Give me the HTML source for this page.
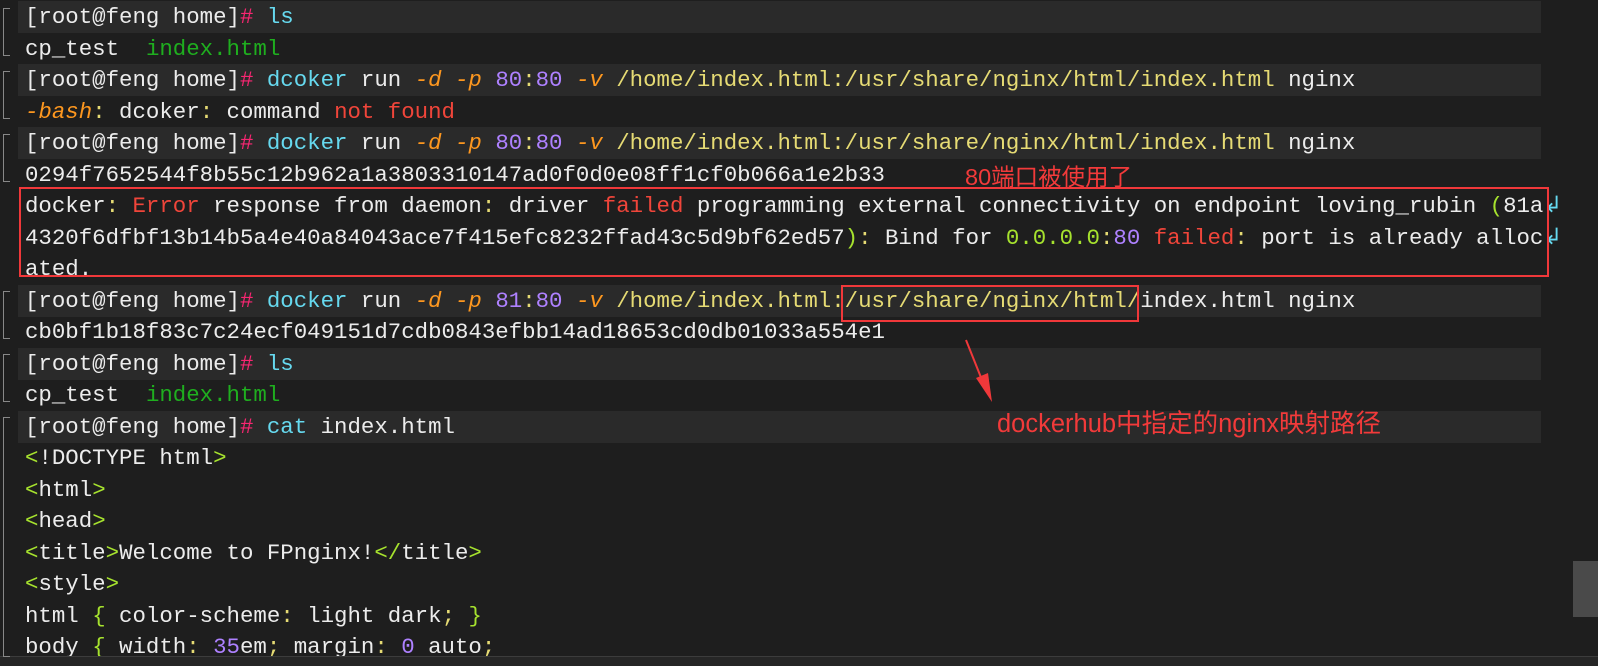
<!DOCTYPE html>
<html><head><meta charset="utf-8"><style>
body{margin:0;width:1598px;height:665px;background:#1e1e1e;overflow:hidden;position:relative;font-family:"Liberation Mono",monospace;}
.l{position:absolute;left:18px;width:1523px;height:32px;line-height:32px;font-size:22.4px;color:#ececec;white-space:pre;padding-left:7px;box-sizing:border-box;}
.b{background:#2a2a2a;}
.h{color:#f92672}.c{color:#66d9ef}.o{color:#fd971f;font-style:italic}.n{color:#ae81ff}.y{color:#e6db74}.g{color:#1fae1f}.r{color:#f0453a}.G{color:#a6e22e}
.f{position:absolute;left:3px;width:6px;border:1px solid #888;border-right:none;}
.ann{position:absolute;color:#f23a3a;font-family:"Liberation Sans","Noto Sans CJK SC",sans-serif;white-space:nowrap;}
.box{position:absolute;border:2px solid #f0383a;}
</style></head><body>
<div class="l b" style="top:1px">[root@feng home]<span class="h">#</span> <span class="c">ls</span></div>
<div class="l" style="top:32.5px">cp_test  <span class="g">index.html</span></div>
<div class="l b" style="top:64px">[root@feng home]<span class="h">#</span> <span class="c">dcoker</span> run <span class="o">-d</span> <span class="o">-p</span> <span class="n">80</span><span class="y">:</span><span class="n">80</span> <span class="o">-v</span> <span class="y">/home/index.html:/usr/share/nginx/html/index.html</span> nginx</div>
<div class="l" style="top:95.5px"><span class="o">-bash</span><span class="y">:</span> dcoker<span class="y">:</span> command <span class="r">not found</span></div>
<div class="l b" style="top:127px">[root@feng home]<span class="h">#</span> <span class="c">docker</span> run <span class="o">-d</span> <span class="o">-p</span> <span class="n">80</span><span class="y">:</span><span class="n">80</span> <span class="o">-v</span> <span class="y">/home/index.html:/usr/share/nginx/html/index.html</span> nginx</div>
<div class="l" style="top:158.5px">0294f7652544f8b55c12b962a1a3803310147ad0f0d0e08ff1cf0b066a1e2b33</div>
<div class="l" style="top:190px">docker<span class="y">:</span> <span class="r">Error</span> response from daemon<span class="y">:</span> driver <span class="r">failed</span> programming external connectivity on endpoint loving_rubin <span class="G">(</span>81a<span class="c">↲</span></div>
<div class="l" style="top:221.5px">4320f6dfbf13b14b5a4e40a84043ace7f415efc8232ffad43c5d9bf62ed57<span class="G">)</span><span class="y">:</span> Bind for <span class="G">0.0.0.0</span><span class="y">:</span><span class="n">80</span> <span class="r">failed</span><span class="y">:</span> port is already alloc<span class="c">↲</span></div>
<div class="l" style="top:253px">ated.</div>
<div class="l b" style="top:284.5px">[root@feng home]<span class="h">#</span> <span class="c">docker</span> run <span class="o">-d</span> <span class="o">-p</span> <span class="n">81</span><span class="y">:</span><span class="n">80</span> <span class="o">-v</span> <span class="y">/home/index.html:/usr/share/nginx/html/</span>index.html nginx</div>
<div class="l" style="top:316px">cb0bf1b18f83c7c24ecf049151d7cdb0843efbb14ad18653cd0db01033a554e1</div>
<div class="l b" style="top:347.5px">[root@feng home]<span class="h">#</span> <span class="c">ls</span></div>
<div class="l" style="top:379px">cp_test  <span class="g">index.html</span></div>
<div class="l b" style="top:410.5px">[root@feng home]<span class="h">#</span> <span class="c">cat</span> index.html</div>
<div class="l" style="top:442px"><span class="G">&lt;</span>!DOCTYPE html<span class="G">&gt;</span></div>
<div class="l" style="top:473.5px"><span class="G">&lt;</span>html<span class="G">&gt;</span></div>
<div class="l" style="top:505px"><span class="G">&lt;</span>head<span class="G">&gt;</span></div>
<div class="l" style="top:536.5px"><span class="G">&lt;</span>title<span class="G">&gt;</span>Welcome to FPnginx!<span class="G">&lt;/</span>title<span class="G">&gt;</span></div>
<div class="l" style="top:568px"><span class="G">&lt;</span>style<span class="G">&gt;</span></div>
<div class="l" style="top:599.5px">html <span class="G">{</span> color-scheme<span class="y">:</span> light dark<span class="y">;</span> <span class="G">}</span></div>
<div class="l" style="top:631px">body <span class="G">{</span> width<span class="y">:</span> <span class="n">35</span>em<span class="y">;</span> margin<span class="y">:</span> <span class="n">0</span> auto<span class="y">;</span></div>
<div style="position:absolute;left:0;top:656px;width:1598px;height:9px;background:#262626;border-top:1px solid #3c3c3c"></div>
<div class="f" style="top:8px;height:46px"></div>
<div class="f" style="top:71px;height:46px"></div>
<div class="f" style="top:134px;height:46px"></div>
<div class="f" style="top:291px;height:46px"></div>
<div class="f" style="top:354px;height:46px"></div>
<div class="f" style="top:417px;height:238px"></div>
<div style="position:absolute;left:1573px;top:561px;width:25px;height:56px;background:#4a4a4a"></div>
<div class="box" style="left:19px;top:187px;width:1526px;height:86px"></div>
<div class="box" style="left:841px;top:285px;width:294px;height:33px"></div>
<div class="ann" style="left:965px;top:158px;font-size:23.5px">80端口被使用了</div>
<div class="ann" style="left:997px;top:403px;font-size:25.5px">dockerhub中指定的nginx映射路径</div>
<svg style="position:absolute;left:0;top:0" width="1598" height="665"><line x1="966" y1="340" x2="982" y2="380" stroke="#f0383a" stroke-width="2"/><polygon points="976,378 988,373 992,402" fill="#f0383a"/></svg>
</body></html>
